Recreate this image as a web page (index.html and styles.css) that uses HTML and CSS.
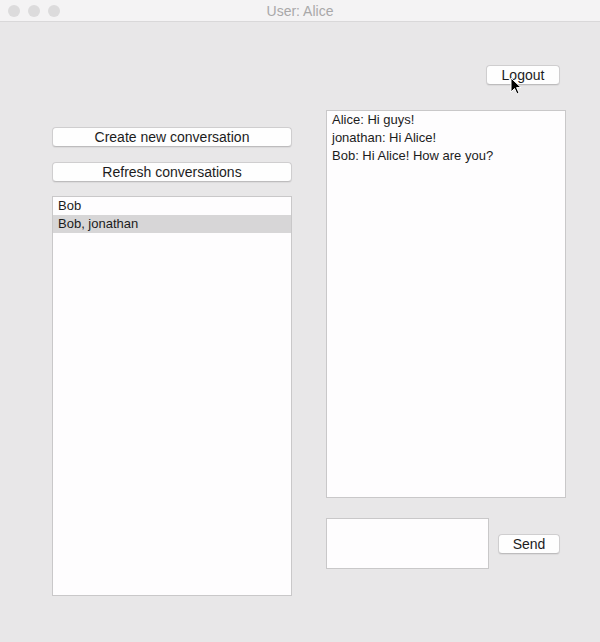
FILE: index.html
```html
<!DOCTYPE html>
<html lang="en">
<head>
    <meta charset="UTF-8">
    <meta name="viewport" content="width=device-width, initial-scale=1.0">
    <title>User: Alice</title>
    <link rel="stylesheet" href="styles.css">
</head>
<body>
    <div class="window">
        <div class="titlebar">
            <div class="lights">
                <span class="light"></span>
                <span class="light"></span>
                <span class="light"></span>
            </div>
            <div class="title">User: Alice</div>
        </div>

        <div class="main">
            <div class="left">
                <button class="btn wide">Create new conversation</button>
                <button class="btn wide">Refresh conversations</button>
                <ul class="list">
                    <li>Bob</li>
                    <li class="selected">Bob, jonathan</li>
                </ul>
            </div>

            <div class="right">
                <button class="btn logout">Logout</button>
                <div class="messages">
                    <div class="msg">Alice: Hi guys!</div>
                    <div class="msg">jonathan: Hi Alice!</div>
                    <div class="msg">Bob: Hi Alice! How are you?</div>
                </div>
                <div class="compose">
                    <textarea class="input"></textarea>
                    <button class="btn send">Send</button>
                </div>
            </div>
        </div>

        <!-- mouse pointer over the logout button -->
        <svg class="cursor" width="12" height="18" viewBox="0 0 12 18">
            <path d="M1 1 L1 15 L4.5 11.5 L7 17 L9 16 L6.6 10.6 L11 10.6 Z" fill="#000" stroke="#fff" stroke-width="1"/>
        </svg>
    </div>
</body>
</html>
```

FILE: styles.css
```css
body {
    margin: 0;
    font-family: 'Liberation Sans', Arial, sans-serif;
    font-size: 13px;
    color: #1c1c1c;
    background: #e8e7e8;
}
.window {
    position: relative;
    width: 600px;
    height: 642px;
    background: #e8e7e8;
    overflow: hidden;
}
.titlebar {
    position: relative;
    height: 21px;
    background: #f4f3f4;
    border-bottom: 1px solid #d9d8d9;
    display: flex;
    align-items: center;
    justify-content: center;
}
.lights {
    position: absolute;
    left: 8px;
    top: 5px;
    display: flex;
    gap: 8px;
}
.light {
    width: 12px;
    height: 12px;
    border-radius: 50%;
    background: #dcdbdc;
}
.title {
    color: #a9a8a9;
    font-size: 14px;
}
.main {
    display: flex;
    padding-left: 52px;
    gap: 34px;
}
.left {
    width: 240px;
    display: flex;
    flex-direction: column;
    padding-top: 105px;
}
.right {
    width: 240px;
    display: flex;
    flex-direction: column;
    padding-top: 43px;
}
.btn {
    height: 20px;
    padding: 0;
    background: #fefefe;
    border: 1px solid #cfcecf;
    border-bottom-color: #bdbcbd;
    border-radius: 4px;
    font-family: inherit;
    font-size: 14px;
    color: #1c1c1c;
    box-shadow: 0 1px 1px rgba(0,0,0,0.06);
}
.wide {
    width: 240px;
}
.wide + .wide {
    margin-top: 15px;
}
.list {
    list-style: none;
    margin: 14px 0 0;
    padding: 0;
    height: 398px;
    background: #fefdfe;
    border: 1px solid #c9c8c9;
}
.list li {
    height: 18px;
    line-height: 18px;
    padding-left: 5px;
}
.list .selected {
    background: #d7d6d7;
}
.logout {
    width: 74px;
    align-self: flex-end;
    margin-right: 6px;
}
.messages {
    margin-top: 25px;
    height: 386px;
    padding: 0 5px;
    background: #fefdfe;
    border: 1px solid #c9c8c9;
}
.msg {
    height: 18px;
    line-height: 18px;
}
.compose {
    display: flex;
    align-items: center;
    margin-top: 20px;
}
.input {
    width: 163px;
    height: 51px;
    box-sizing: border-box;
    margin: 0;
    background: #fefdfe;
    border: 1px solid #c9c8c9;
    resize: none;
}
.send {
    width: 62px;
    margin-left: 9px;
    margin-top: 1px;
}
.cursor {
    position: absolute;
    left: 510px;
    top: 77px;
}
```
